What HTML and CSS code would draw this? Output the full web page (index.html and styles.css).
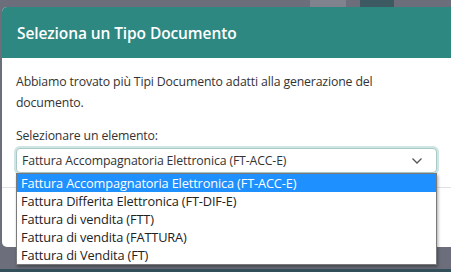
FILE: index.html
```html
<!DOCTYPE html>
<html lang="it">
<head>
    <meta charset="UTF-8">
    <meta name="viewport" content="width=device-width, initial-scale=1.0">
    <title>Seleziona un Tipo Documento</title>
    <link rel="stylesheet" href="styles.css">
</head>
<body>
    <div class="backdrop">
        <div class="page-strip">
            <span class="strip-box light"></span>
            <span class="strip-box dark"></span>
        </div>

        <div class="modal">
            <div class="modal-header">
                <h2>Seleziona un Tipo Documento</h2>
            </div>
            <div class="modal-body">
                <p>Abbiamo trovato più Tipi Documento adatti alla generazione del documento.</p>

                <label class="field-label">Selezionare un elemento:</label>
                <div class="select-container">
                    <div class="select-box">
                        <span>Fattura Accompagnatoria Elettronica (FT-ACC-E)</span>
                        <svg class="chevron" width="12" height="8" viewBox="0 0 12 8">
                            <path d="M1.5 1.5 L6 6 L10.5 1.5" fill="none" stroke="#555" stroke-width="1.3"/>
                        </svg>
                    </div>
                    <ul class="options">
                        <li class="selected">Fattura Accompagnatoria Elettronica (FT-ACC-E)</li>
                        <li>Fattura Differita Elettronica (FT-DIF-E)</li>
                        <li>Fattura di vendita (FTT)</li>
                        <li>Fattura di vendita (FATTURA)</li>
                        <li>Fattura di Vendita (FT)</li>
                    </ul>
                </div>
            </div>
            <div class="modal-footer"></div>
        </div>
        <div class="bottom-line"></div>
    </div>
</body>
</html>
```

FILE: styles.css
```css
/* General Styles */
html, body {
    margin: 0;
    padding: 0;
    height: 100%;
    overflow: hidden;
}

body {
    font-family: "Open Sans", "Noto Sans", sans-serif;
    background-color: #6c6e7b;
    color: #333;
}

.backdrop {
    position: relative;
    height: 272px;
    padding-left: 2px;
}

/* bits of the page behind the overlay */
.page-strip {
    height: 7px;
    display: flex;
    padding-left: 308px;
    gap: 14px;
}

.strip-box {
    display: block;
    height: 7px;
}

.strip-box.light {
    width: 36px;
    background-color: #80838e;
}

.strip-box.dark {
    width: 34px;
    background-color: #3d5a62;
}

/* Modal */
.modal {
    background-color: #fff;
    border-radius: 5px 0 0 5px;
    height: 240px;
    overflow: visible;
    display: flex;
    flex-direction: column;
}

.modal-header {
    background-color: #2e8882;
    height: 51px;
    display: flex;
    align-items: center;
    padding-left: 15px;
    border-radius: 5px 0 0 0;
}

.modal-header h2 {
    margin: 0;
    font-size: 15.5px;
    font-weight: 600;
    color: #fff;
    letter-spacing: -0.1px;
}

.modal-body {
    padding: 13px 0 0 14px;
    font-size: 12.3px;
    letter-spacing: -0.15px;
}

.modal-body p {
    margin: 0;
    width: 370px;
    line-height: 21px;
}

.field-label {
    display: block;
    margin-top: 14px;
    line-height: 18px;
}

.select-container {
    position: relative;
    width: 421px;
    margin-top: 3px;
}

.select-box {
    height: 23px;
    border: 1px solid #a9c9c6;
    border-radius: 4px;
    box-shadow: 0 0 0 2px #cfe5e3;
    background-color: #fff;
    display: flex;
    align-items: center;
    justify-content: space-between;
    padding: 0 13px 0 5px;
}

.chevron {
    display: block;
}

/* Open dropdown list */
.options {
    position: absolute;
    left: 0;
    top: 25px;
    width: 419px;
    margin: 0;
    padding: 0;
    list-style: none;
    background-color: #fff;
    border: 1px solid #7a7a7a;
    box-shadow: 1px 2px 3px rgba(0, 0, 0, 0.35);
    font-size: 12.8px;
    letter-spacing: -0.15px;
    z-index: 2;
}

.options li {
    height: 18px;
    line-height: 18px;
    padding-left: 4px;
    color: #222;
}

.options li.selected {
    background-color: #1e90ff;
    color: #fff;
}

.modal-footer {
    margin-top: 14px;
    border-top: 1px solid #dee2e6;
}

.bottom-line {
    position: absolute;
    left: 0;
    right: 0;
    bottom: 0;
    height: 3px;
    background-color: #33505a;
}
```
